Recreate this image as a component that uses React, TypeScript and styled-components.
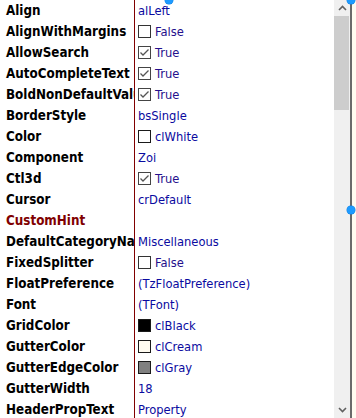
import React from "react";
import styled, { createGlobalStyle } from "styled-components";

const Global = createGlobalStyle`
  html, body { margin: 0; padding: 0; background: #ffffff; }
  body { overflow: hidden; }
`;

const Frame = styled.div`
  position: relative;
  width: 356px;
  height: 418px;
  overflow: hidden;
  display: flex;
  background: #ffffff;
`;

const List = styled.div`
  width: 334px;
  display: flex;
  flex-direction: column;
  overflow: hidden;
`;

const Row = styled.div`
  display: grid;
  grid-template-columns: 134px 1px 1fr;
  height: 21px;
  flex: 0 0 21px;
`;

const Name = styled.div<{ $highlight?: boolean }>`
  padding-left: 6px;
  font-family: "DejaVu Sans Condensed", "DejaVu Sans", sans-serif;
  font-weight: bold;
  font-size: 13.3px;
  line-height: 21px;
  color: ${(p) => (p.$highlight ? "#800000" : "#000000")};
  white-space: nowrap;
  overflow: hidden;
`;

const Divider = styled.div`
  background: #800000;
`;

const Value = styled.div`
  padding-left: 3px;
  display: flex;
  align-items: center;
  gap: 4px;
  font-family: "DejaVu Sans Condensed", "DejaVu Sans", sans-serif;
  font-size: 12.8px;
  color: #0a0aa0;
  white-space: nowrap;
  overflow: hidden;
`;

const BoolText = styled.span`
  color: #24108c;
`;

const Swatch = styled.span<{ $fill: string }>`
  display: inline-block;
  box-sizing: border-box;
  width: 13px;
  height: 13px;
  border: 1px solid #1a1a1a;
  background: ${(p) => p.$fill};
  flex: 0 0 13px;
`;

const ScrollBar = styled.div`
  width: 16px;
  background: #f0f0f0;
  display: flex;
  flex-direction: column;
`;

const ArrowBtn = styled.div`
  height: 16px;
  display: flex;
  align-items: center;
  justify-content: center;
`;

const Track = styled.div`
  flex: 1;
  display: flex;
  flex-direction: column;
`;

const Thumb = styled.div`
  height: 94px;
  background: #cdcdcd;
  margin: 0 1px 0 0;
`;

const Edge = styled.div`
  width: 2px;
  background: #6a6a6a;
`;

const Cream = styled.div`
  flex: 1;
  background: #fffbf0;
`;

const Handle = styled.div<{ $x: number; $y: number }>`
  position: absolute;
  left: ${(p) => p.$x - 4}px;
  top: ${(p) => p.$y - 4}px;
  width: 8px;
  height: 8px;
  border-radius: 50%;
  background: #1e9bff;
  box-shadow: 0 0 0 0.5px #0f7fe0;
`;

const CheckBox = ({ checked }: { checked: boolean }) => (
  <svg width="13" height="13" viewBox="0 0 13 13" style={{ flex: "0 0 13px" }}>
    <rect x="0.5" y="0.5" width="12" height="12" fill="#fff" stroke={checked ? "#444" : "#333"} />
    {checked && (
      <polyline points="2.5,6.5 5,9 10.5,3.5" fill="none" stroke="#555" strokeWidth="1.3" />
    )}
  </svg>
);

type Prop =
  | { name: string; kind: "text"; value: string; hl?: boolean }
  | { name: string; kind: "bool"; value: boolean }
  | { name: string; kind: "color"; value: string; fill: string };

const props: Prop[] = [
  { name: "Align", kind: "text", value: "alLeft" },
  { name: "AlignWithMargins", kind: "bool", value: false },
  { name: "AllowSearch", kind: "bool", value: true },
  { name: "AutoCompleteText", kind: "bool", value: true },
  { name: "BoldNonDefaultValues", kind: "bool", value: true },
  { name: "BorderStyle", kind: "text", value: "bsSingle" },
  { name: "Color", kind: "color", value: "clWhite", fill: "#ffffff" },
  { name: "Component", kind: "text", value: "Zoi" },
  { name: "Ctl3d", kind: "bool", value: true },
  { name: "Cursor", kind: "text", value: "crDefault" },
  { name: "CustomHint", kind: "text", value: "", hl: true },
  { name: "DefaultCategoryName", kind: "text", value: "Miscellaneous" },
  { name: "FixedSplitter", kind: "bool", value: false },
  { name: "FloatPreference", kind: "text", value: "(TzFloatPreference)" },
  { name: "Font", kind: "text", value: "(TFont)" },
  { name: "GridColor", kind: "color", value: "clBlack", fill: "#000000" },
  { name: "GutterColor", kind: "color", value: "clCream", fill: "#fffbf0" },
  { name: "GutterEdgeColor", kind: "color", value: "clGray", fill: "#808080" },
  { name: "GutterWidth", kind: "text", value: "18" },
  { name: "HeaderPropText", kind: "text", value: "Property" },
];

const Chevron = ({ up }: { up: boolean }) => (
  <svg width="9" height="6" viewBox="0 0 9 6">
    <polyline
      points={up ? "1,5 4.5,1.5 8,5" : "1,1 4.5,4.5 8,1"}
      fill="none"
      stroke="#606060"
      strokeWidth="1.6"
    />
  </svg>
);

export default function App() {
  return (
    <>
      <Global />
      <Frame>
        <List>
          {props.map((p) => (
            <Row key={p.name}>
              <Name $highlight={p.kind === "text" && p.hl}>{p.name}</Name>
              <Divider />
              <Value>
                {p.kind === "text" && p.value}
                {p.kind === "bool" && (
                  <>
                    <CheckBox checked={p.value} />
                    <BoolText>{p.value ? "True" : "False"}</BoolText>
                  </>
                )}
                {p.kind === "color" && (
                  <>
                    <Swatch $fill={p.fill} />
                    <span>{p.value}</span>
                  </>
                )}
              </Value>
            </Row>
          ))}
        </List>
        <ScrollBar>
          <ArrowBtn>
            <Chevron up />
          </ArrowBtn>
          <Track>
            <Thumb />
          </Track>
          <ArrowBtn>
            <Chevron up={false} />
          </ArrowBtn>
        </ScrollBar>
        <Edge />
        <Cream />
        <Handle $x={169} $y={0} />
        <Handle $x={351} $y={0} />
        <Handle $x={351} $y={210} />
      </Frame>
    </>
  );
}
